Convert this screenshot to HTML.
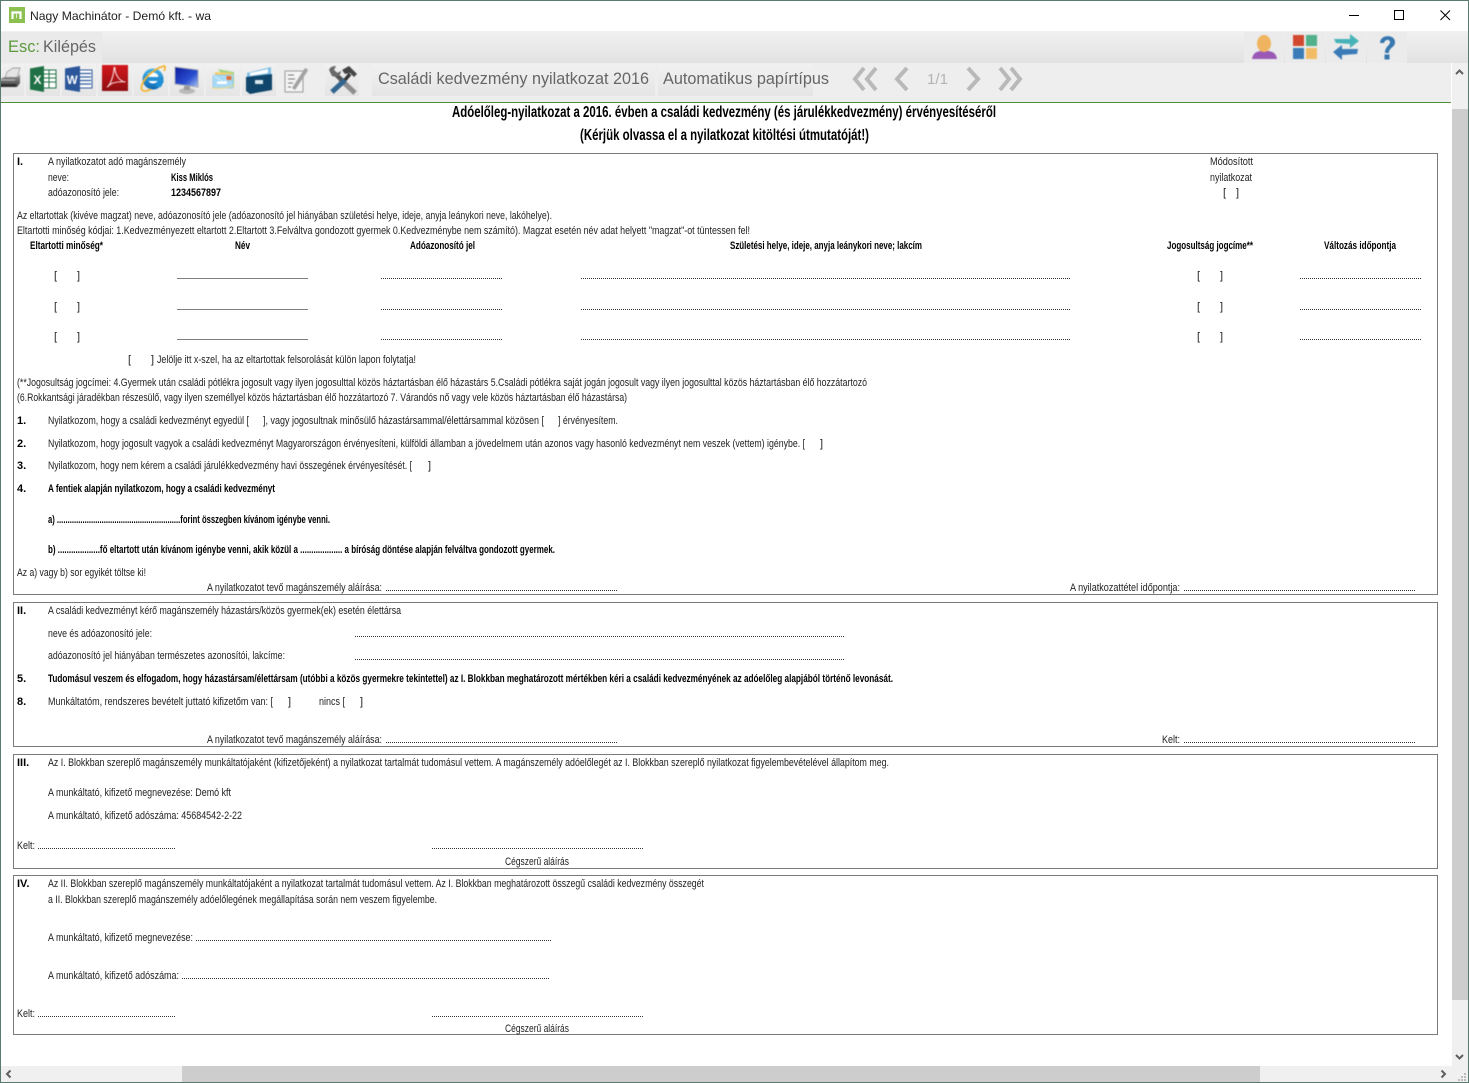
<!DOCTYPE html>
<html lang="hu"><head><meta charset="utf-8"><title>Nagy Machinátor</title>
<style>
html,body{margin:0;padding:0;background:#fff;width:1469px;height:1083px;overflow:hidden}
svg{display:block;position:absolute;left:0;top:0}
text{font-family:"Liberation Sans",sans-serif}
.d text{font-size:11px;fill:#222;filter:blur(.3px)}
.d .b{font-weight:bold;fill:#000}
.d .h{font-size:16px;font-weight:bold;fill:#000}
.d line{stroke:#333;stroke-width:1;stroke-dasharray:1 1}
.d line.s{stroke:#808080;stroke-dasharray:none}
.d rect.bx{fill:none;stroke:#7a7a7a;stroke-width:1}
.tb{font-size:17px;fill:#666;filter:blur(.25px)}
.ic{filter:blur(.45px)}
</style></head><body>
<svg width="1469" height="1083" viewBox="0 0 1469 1083" xmlns="http://www.w3.org/2000/svg">
<defs>
<linearGradient id="g1" x1="0" y1="0" x2="0" y2="1"><stop offset="0" stop-color="#f1f1f1"/><stop offset="1" stop-color="#e2e2e2"/></linearGradient>
<linearGradient id="g3" x1="0" y1="0" x2="0" y2="1"><stop offset="0" stop-color="#f1f1f1"/><stop offset="1" stop-color="#e5e5e5"/></linearGradient>
<linearGradient id="pdf" x1="0" y1="0" x2="0" y2="1"><stop offset="0" stop-color="#d3181c"/><stop offset="1" stop-color="#8e0d10"/></linearGradient>
<linearGradient id="mon" x1="0" y1="0" x2="1" y2="1"><stop offset="0" stop-color="#0d1a9c"/><stop offset=".6" stop-color="#2a4fd0"/><stop offset="1" stop-color="#a9c4f4"/></linearGradient>
<linearGradient id="ie" x1="0" y1="0" x2="0" y2="1"><stop offset="0" stop-color="#45b4ea"/><stop offset="1" stop-color="#0d66b0"/></linearGradient>
<linearGradient id="prt" x1="0" y1="0" x2="0" y2="1"><stop offset="0" stop-color="#9a9a9a"/><stop offset="1" stop-color="#444"/></linearGradient>
</defs>

<!-- window chrome -->
<rect width="1469" height="1083" fill="#fff"/>
<rect x="0" y="31" width="1469" height="32" fill="url(#g1)"/>
<rect x="0" y="63" width="1451" height="39" fill="#eeeeee"/>
<rect x="0" y="102" width="1451" height="1" fill="#4f8f3a"/>

<!-- title bar -->
<rect x="9" y="7" width="16" height="16" fill="#8cc152"/>
<path d="M12.500 19V12.500H20.500V19" fill="none" stroke="#fff" stroke-width="2.200"/><path d="M16.500 14V18" stroke="#e4f0d4" stroke-width="1"/>
<text x="30" y="20" font-size="12" fill="#222" textLength="181" lengthAdjust="spacingAndGlyphs">Nagy Machinátor - Demó kft. - wa</text>
<path d="M1349 15.500H1359" stroke="#000" stroke-width="1"/>
<rect x="1394.500" y="10.500" width="9" height="9" fill="none" stroke="#000"/>
<path d="M1440.500 10.500L1450 20M1450 10.500L1440.500 20" stroke="#000" stroke-width="1" fill="none"/>

<!-- esc -->
<rect x="0" y="32" width="102" height="31" fill="#eaeaea"/>
<text x="8" y="52" font-size="17" fill="#5c9a3c" textLength="32" lengthAdjust="spacingAndGlyphs">Esc:</text>
<text x="43" y="52" font-size="17" fill="#666" textLength="53" lengthAdjust="spacingAndGlyphs">Kilépés</text>

<!-- right top buttons -->
<g fill="#ebebeb"><rect x="1244" y="32" width="40" height="31"/><rect x="1285" y="32" width="40" height="31"/><rect x="1326" y="32" width="40" height="31"/><rect x="1367" y="32" width="40" height="31"/></g>
<g class="ic">
<path d="M1252 59c1-6 4-7 8-8h9c4 1 7 2 8 8z" fill="#9b59b6"/>
<ellipse cx="1264" cy="43.500" rx="7" ry="8.500" fill="#f0b461"/>
<rect x="1293" y="35" width="11" height="11" fill="#d14a2f"/><rect x="1306" y="35" width="11" height="11" fill="#52b08a"/>
<rect x="1293" y="48" width="11" height="11" fill="#3b7cb8"/><rect x="1306" y="48" width="11" height="11" fill="#f2bc66"/>
<path d="M1334 39h16v-5l9 7-9 7v-4l-14-1z" fill="#47b3b8"/>
<path d="M1358 49h-16v-4l-9 7 9 8v-5l15-1z" fill="#3b7cb8"/>
<path d="M1380 43c0-9 15-9 15-1 0 6-6 5-6 11h-4c0-7 5-7 5-11 0-3-5-3-6 1z" fill="#3677ad"/><rect x="1384.500" y="54.500" width="5" height="5" fill="#3677ad"/>
</g>

<!-- toolbar buttons -->
<g fill="url(#g3)">
<rect x="0" y="64" width="24" height="32"/><rect x="26" y="64" width="34" height="32"/><rect x="62" y="64" width="34" height="32"/><rect x="98" y="64" width="34" height="32"/><rect x="134" y="64" width="34" height="32"/><rect x="170" y="64" width="34" height="32"/><rect x="206" y="64" width="34" height="32"/><rect x="242" y="64" width="34" height="32"/><rect x="325" y="64" width="34" height="32"/>
<rect x="372" y="64" width="283" height="32"/><rect x="658" y="64" width="155" height="32"/>
</g>
<g class="ic">
<!-- printer -->
<path d="M7 72l6-4h7l-3 10H5z" fill="#e4e4e4" stroke="#8c8c8c" stroke-width=".7"/>
<path d="M0 79l5-2h13l2-3v9l-3 4H0z" fill="url(#prt)"/><path d="M0 84h16v3H0z" fill="#2f2f2f"/><path d="M0 80h15" stroke="#c8c8c8"/>
<!-- excel -->
<rect x="42" y="70" width="14" height="18" fill="#fff" stroke="#1f7145"/>
<path d="M43 74h13M43 78h13M43 82h13M49 70v18" stroke="#1f7145" stroke-width="1"/>
<path d="M30 68.500l14-2.500v26l-14-2.500z" fill="#1f7145"/><text x="33.500" y="84" font-size="12" font-weight="bold" fill="#fff">X</text>
<!-- word -->
<rect x="78" y="70" width="14" height="18" fill="#fff" stroke="#2b579a"/><path d="M80 73.500h11M80 77h11M80 80.500h11M80 84h11" stroke="#2b579a" stroke-width="1.200"/>
<path d="M65 68.500l15-2.500v26l-15-2.500z" fill="#2b579a"/><text x="66.800" y="84" font-size="11.500" font-weight="bold" fill="#fff">W</text>
<!-- pdf -->
<rect x="102" y="65" width="26" height="26" fill="url(#pdf)"/>
<path d="M107 87c3-1 7-12 7-19 0-1 1-1 1 0 0 6 4 13 10 14 1 0-5-1-12 1-3 1-5 4-6 4z" fill="none" stroke="#f6d8d8" stroke-width="1.100"/>
<!-- IE -->
<circle cx="153" cy="79" r="10.500" fill="url(#ie)"/><circle cx="153" cy="78" r="5.500" fill="#fff"/><rect x="146" y="77.500" width="17" height="3.500" fill="#1d8fd6"/><path d="M158 81h6l-3 6h-6z" fill="#1d8fd6"/><path d="M147 81h14v-4h-14z" fill="#2590d4"/><path d="M148 73.500q5-2 10 1l-1 2h-8z" fill="#fff"/>
<path d="M142 90c-3-6 8-20 22-24 2 0 1 3 0 5M142 90c2 2 6 1 9-1" fill="none" stroke="#f2b632" stroke-width="1.800"/>
<!-- monitor -->
<path d="M175 67l23 3v17l-23-3z" fill="url(#mon)" stroke="#a7adb5"/><ellipse cx="187" cy="91" rx="8" ry="3" fill="#b9b9b9"/><rect x="184" y="86" width="6" height="4" fill="#999"/>
<!-- mail -->
<path d="M218 69l16 3v15l-3 1z" fill="#a7d48a"/><path d="M215 72l17 1v15h-18z" fill="#f6cf6d"/>
<rect x="213" y="75" width="20" height="13" fill="#a8daf6" stroke="#7fbfe6" stroke-width=".6"/><path d="M213 75l10 7 10-7" fill="none" stroke="#d3effc"/><rect x="226.500" y="76" width="5" height="4" fill="#e0703a"/><rect x="217" y="81.500" width="10" height="2.500" fill="#fff"/>
<path d="M212 88c8 1 16 0 23-3" fill="none" stroke="#f0dc8a" stroke-width="1.200"/>
<!-- cabinet -->
<path d="M247 73l24-6v8l-24 3z" fill="#7dbde6"/><path d="M250 73l18-4v4l-18 3z" fill="#fff"/>
<path d="M246 77l26-3v16l-22 4-4-3z" fill="#10466b"/><rect x="255" y="80" width="8" height="4" fill="#d8e6ee"/>
<!-- note -->
<path d="M285 71h18v21h-18z" fill="#f4f4f4" stroke="#9a9a9a"/><path d="M288 75h6M288 79h7M288 83h5M288 87h3" stroke="#777"/>
<path d="M292 88l13-20 3 1.500-1 2.500-12 18z" fill="#a2a2a2"/>
<!-- tools -->
<path d="M340 79l15 14" stroke="#8e8e8e" stroke-width="5"/>
<path d="M333 72l11 10" stroke="#555" stroke-width="4.500"/>
<path d="M329 70c1-3 4-4 7-4l-2 4 3 3 4-2c0 4-4 7-9 5z" fill="#6a6a6a"/>
<path d="M345 80l-13 12" stroke="#32658f" stroke-width="5"/>
<path d="M345 80l5-6" stroke="#333" stroke-width="3.500"/>
<path d="M342 70l7-4 8 8-3 3-4-4-5 1z" fill="#444"/>
</g>

<text class="tb" x="378" y="84" textLength="271" lengthAdjust="spacingAndGlyphs">Családi kedvezmény nyilatkozat 2016</text>
<text class="tb" x="663" y="84" textLength="166" lengthAdjust="spacingAndGlyphs">Automatikus papírtípus</text>
<g fill="none" stroke="#b9b9b9" stroke-width="4">
<path d="M864 68l-9 11 9 11M876 68l-9 11 9 11"/><path d="M907 68l-10 11 10 11"/><path d="M968 68l10 11-10 11"/><path d="M1000 68l9 11-9 11M1011 68l9 11-9 11"/>
</g>
<text x="927" y="84" font-size="15" fill="#b4b4b4" textLength="21" lengthAdjust="spacingAndGlyphs">1/1</text>

<!-- scrollbars -->
<rect x="1452" y="63" width="16" height="1004" fill="#f0f0f0"/>
<rect x="1452" y="109" width="16" height="891" fill="#cdcdcd"/>
<path d="M1456 74l3.500-3.500 3.500 3.500" fill="none" stroke="#606060" stroke-width="2"/>
<path d="M1456 1055l3.500 3.500 3.500-3.500" fill="none" stroke="#606060" stroke-width="2"/>
<rect x="1" y="1066" width="1467" height="16" fill="#f0f0f0"/>
<rect x="182" y="1066" width="1078" height="16" fill="#cdcdcd"/>
<path d="M10.500 1070.500L7 1074l3.500 3.500M1441.500 1070.500l3.500 3.500-3.500 3.500" fill="none" stroke="#606060" stroke-width="2"/>
<g fill="#bdbdbd"><rect x="1464" y="1073" width="2" height="2"/><rect x="1461" y="1076" width="2" height="2"/><rect x="1464" y="1076" width="2" height="2"/><rect x="1458" y="1079" width="2" height="2"/><rect x="1461" y="1079" width="2" height="2"/><rect x="1464" y="1079" width="2" height="2"/></g>
<rect x=".5" y=".5" width="1468" height="1082" fill="none" stroke="#5a7a70"/>

<!-- document -->
<g class="d">
<text class="h" x="452" y="117" textLength="544" lengthAdjust="spacingAndGlyphs">Adóelőleg-nyilatkozat a 2016. évben a családi kedvezmény (és járulékkedvezmény) érvényesítéséről</text>
<text class="h" x="580" y="140" textLength="289" lengthAdjust="spacingAndGlyphs">(Kérjük olvassa el a nyilatkozat kitöltési útmutatóját!)</text>

<rect class="bx" x="13.500" y="153.500" width="1424" height="441"/>
<rect class="bx" x="13.500" y="602.500" width="1424" height="144"/>
<rect class="bx" x="13.500" y="754.500" width="1424" height="114"/>
<rect class="bx" x="13.500" y="875.500" width="1424" height="159"/>

<!-- Block I -->
<text class="b" x="17" y="165">I.</text>
<text x="48" y="165" textLength="138" lengthAdjust="spacingAndGlyphs">A nyilatkozatot adó magánszemély</text>
<text x="48" y="181" textLength="21" lengthAdjust="spacingAndGlyphs">neve:</text>
<text class="b" x="171" y="181" textLength="42" lengthAdjust="spacingAndGlyphs">Kiss Miklós</text>
<text x="48" y="196" textLength="71" lengthAdjust="spacingAndGlyphs">adóazonosító jele:</text>
<text class="b" x="171" y="196" textLength="50" lengthAdjust="spacingAndGlyphs">1234567897</text>
<text x="1210" y="165" textLength="43" lengthAdjust="spacingAndGlyphs">Módosított</text>
<text x="1210" y="181" textLength="42" lengthAdjust="spacingAndGlyphs">nyilatkozat</text>
<text x="1223" y="196">[</text><text x="1236" y="196">]</text>
<text x="17" y="219" textLength="535" lengthAdjust="spacingAndGlyphs">Az eltartottak (kivéve magzat) neve, adóazonosító jele (adóazonosító jel hiányában születési helye, ideje, anyja leánykori neve, lakóhelye).</text>
<text x="17" y="234" textLength="733" lengthAdjust="spacingAndGlyphs">Eltartotti minőség kódjai: 1.Kedvezményezett eltartott 2.Eltartott 3.Felváltva gondozott gyermek 0.Kedvezménybe nem számító). Magzat esetén név adat helyett "magzat"-ot tüntessen fel!</text>
<text class="b" x="30" y="249" textLength="73" lengthAdjust="spacingAndGlyphs">Eltartotti minőség*</text>
<text class="b" x="235" y="249" textLength="15" lengthAdjust="spacingAndGlyphs">Név</text>
<text class="b" x="410" y="249" textLength="65" lengthAdjust="spacingAndGlyphs">Adóazonosító jel</text>
<text class="b" x="730" y="249" textLength="192" lengthAdjust="spacingAndGlyphs">Születési helye, ideje, anyja leánykori neve; lakcím</text>
<text class="b" x="1167" y="249" textLength="86" lengthAdjust="spacingAndGlyphs">Jogosultság jogcíme**</text>
<text class="b" x="1324" y="249" textLength="72" lengthAdjust="spacingAndGlyphs">Változás időpontja</text>

<text x="54" y="279">[</text><text x="77" y="279">]</text><text x="1197" y="279">[</text><text x="1220" y="279">]</text>
<text x="54" y="310">[</text><text x="77" y="310">]</text><text x="1197" y="310">[</text><text x="1220" y="310">]</text>
<text x="54" y="340">[</text><text x="77" y="340">]</text><text x="1197" y="340">[</text><text x="1220" y="340">]</text>
<line class="s" x1="177" x2="308" y1="278.500" y2="278.500"/><line x1="381" x2="503" y1="278.500" y2="278.500"/><line x1="581" x2="1071" y1="278.500" y2="278.500"/><line x1="1300" x2="1421" y1="278.500" y2="278.500"/>
<line class="s" x1="177" x2="308" y1="309.500" y2="309.500"/><line x1="381" x2="503" y1="309.500" y2="309.500"/><line x1="581" x2="1071" y1="309.500" y2="309.500"/><line x1="1300" x2="1421" y1="309.500" y2="309.500"/>
<line class="s" x1="177" x2="308" y1="339.500" y2="339.500"/><line x1="381" x2="503" y1="339.500" y2="339.500"/><line x1="581" x2="1071" y1="339.500" y2="339.500"/><line x1="1300" x2="1421" y1="339.500" y2="339.500"/>

<text x="128" y="363">[</text><text x="151" y="363">]</text>
<text x="157" y="363" textLength="259" lengthAdjust="spacingAndGlyphs">Jelölje itt x-szel, ha az eltartottak felsorolását külön lapon folytatja!</text>
<text x="17" y="386" textLength="850" lengthAdjust="spacingAndGlyphs">(**Jogosultság jogcímei: 4.Gyermek után családi pótlékra jogosult vagy ilyen jogosulttal közös háztartásban élő házastárs 5.Családi pótlékra saját jogán jogosult vagy ilyen jogosulttal közös háztartásban élő hozzátartozó</text>
<text x="17" y="401" textLength="610" lengthAdjust="spacingAndGlyphs">(6.Rokkantsági járadékban részesülő, vagy ilyen személlyel közös háztartásban élő hozzátartozó 7. Várandós nő vagy vele közös háztartásban élő házastársa)</text>

<text class="b" x="17" y="424">1.</text>
<text x="48" y="424" textLength="201" lengthAdjust="spacingAndGlyphs">Nyilatkozom, hogy a családi kedvezményt egyedül [</text>
<text x="263" y="424" textLength="281" lengthAdjust="spacingAndGlyphs">], vagy jogosultnak minősülő házastársammal/élettársammal közösen [</text>
<text x="558" y="424" textLength="60" lengthAdjust="spacingAndGlyphs">] érvényesítem.</text>
<text class="b" x="17" y="447">2.</text>
<text x="48" y="447" textLength="757" lengthAdjust="spacingAndGlyphs">Nyilatkozom, hogy jogosult vagyok a családi kedvezményt Magyarországon érvényesíteni, külföldi államban a jövedelmem után azonos vagy hasonló kedvezményt nem veszek (vettem) igénybe. [</text>
<text x="820" y="447">]</text>
<text class="b" x="17" y="469">3.</text>
<text x="48" y="469" textLength="364" lengthAdjust="spacingAndGlyphs">Nyilatkozom, hogy nem kérem a családi járulékkedvezmény havi összegének érvényesítését. [</text>
<text x="428" y="469">]</text>
<text class="b" x="17" y="492">4.</text>
<text class="b" x="48" y="492" textLength="227" lengthAdjust="spacingAndGlyphs">A fentiek alapján nyilatkozom, hogy a családi kedvezményt</text>
<text class="b" x="48" y="523" textLength="282" lengthAdjust="spacingAndGlyphs">a) ..........................................................forint összegben kívánom igénybe venni.</text>
<text class="b" x="48" y="553" textLength="507" lengthAdjust="spacingAndGlyphs">b) ...................fő eltartott után kívánom igénybe venni, akik közül a ................... a bíróság döntése alapján felváltva gondozott gyermek.</text>
<text x="17" y="576" textLength="129" lengthAdjust="spacingAndGlyphs">Az a) vagy b) sor egyikét töltse ki!</text>
<text x="207" y="591" textLength="175" lengthAdjust="spacingAndGlyphs">A nyilatkozatot tevő magánszemély aláírása:</text>
<line x1="386" x2="618" y1="590.500" y2="590.500"/>
<text x="1070" y="591" textLength="110" lengthAdjust="spacingAndGlyphs">A nyilatkozattétel időpontja:</text>
<line x1="1184" x2="1416" y1="590.500" y2="590.500"/>

<!-- Block II -->
<text class="b" x="17" y="614">II.</text>
<text x="48" y="614" textLength="353" lengthAdjust="spacingAndGlyphs">A családi kedvezményt kérő magánszemély házastárs/közös gyermek(ek) esetén élettársa</text>
<text x="48" y="637" textLength="104" lengthAdjust="spacingAndGlyphs">neve és adóazonosító jele:</text>
<line x1="355" x2="845" y1="636.500" y2="636.500"/>
<text x="48" y="659" textLength="237" lengthAdjust="spacingAndGlyphs">adóazonosító jel hiányában természetes azonosítói, lakcíme:</text>
<line x1="355" x2="845" y1="659.500" y2="659.500"/>
<text class="b" x="17" y="682">5.</text>
<text class="b" x="48" y="682" textLength="845" lengthAdjust="spacingAndGlyphs">Tudomásul veszem és elfogadom, hogy házastársam/élettársam (utóbbi a közös gyermekre tekintettel) az I. Blokkban meghatározott mértékben kéri a családi kedvezményének az adóelőleg alapjából történő levonását.</text>
<text class="b" x="17" y="705">8.</text>
<text x="48" y="705" textLength="225" lengthAdjust="spacingAndGlyphs">Munkáltatóm, rendszeres bevételt juttató kifizetőm van: [</text>
<text x="288" y="705">]</text>
<text x="319" y="705" textLength="26" lengthAdjust="spacingAndGlyphs">nincs [</text>
<text x="360" y="705">]</text>
<text x="207" y="743" textLength="175" lengthAdjust="spacingAndGlyphs">A nyilatkozatot tevő magánszemély aláírása:</text>
<line x1="386" x2="618" y1="742.500" y2="742.500"/>
<text x="1162" y="743" textLength="18" lengthAdjust="spacingAndGlyphs">Kelt:</text>
<line x1="1184" x2="1416" y1="742.500" y2="742.500"/>

<!-- Block III -->
<text class="b" x="17" y="766">III.</text>
<text x="48" y="766" textLength="841" lengthAdjust="spacingAndGlyphs">Az I. Blokkban szereplő magánszemély munkáltatójaként (kifizetőjeként) a nyilatkozat tartalmát tudomásul vettem. A magánszemély adóelőlegét az I. Blokkban szereplő nyilatkozat figyelembevételével állapítom meg.</text>
<text x="48" y="796" textLength="183" lengthAdjust="spacingAndGlyphs">A munkáltató, kifizető megnevezése: Demó kft</text>
<text x="48" y="819" textLength="194" lengthAdjust="spacingAndGlyphs">A munkáltató, kifizető adószáma: 45684542-2-22</text>
<text x="17" y="849" textLength="18" lengthAdjust="spacingAndGlyphs">Kelt:</text>
<line x1="38" x2="175" y1="848.500" y2="848.500"/>
<line x1="432" x2="643" y1="848.500" y2="848.500"/>
<text x="505" y="865" textLength="64" lengthAdjust="spacingAndGlyphs">Cégszerű aláírás</text>

<!-- Block IV -->
<text class="b" x="17" y="887">IV.</text>
<text x="48" y="887" textLength="656" lengthAdjust="spacingAndGlyphs">Az II. Blokkban szereplő magánszemély munkáltatójaként a nyilatkozat tartalmát tudomásul vettem. Az I. Blokkban meghatározott összegű családi kedvezmény összegét</text>
<text x="48" y="903" textLength="389" lengthAdjust="spacingAndGlyphs">a II. Blokkban szereplő magánszemély adóelőlegének megállapítása során nem veszem figyelembe.</text>
<text x="48" y="941" textLength="145" lengthAdjust="spacingAndGlyphs">A munkáltató, kifizető megnevezése:</text>
<line x1="196" x2="551" y1="940.500" y2="940.500"/>
<text x="48" y="979" textLength="131" lengthAdjust="spacingAndGlyphs">A munkáltató, kifizető adószáma:</text>
<line x1="182" x2="549" y1="978.500" y2="978.500"/>
<text x="17" y="1017" textLength="18" lengthAdjust="spacingAndGlyphs">Kelt:</text>
<line x1="38" x2="175" y1="1016.500" y2="1016.500"/>
<line x1="432" x2="643" y1="1016.500" y2="1016.500"/>
<text x="505" y="1032" textLength="64" lengthAdjust="spacingAndGlyphs">Cégszerű aláírás</text>
</g>
</svg>
</body></html>
